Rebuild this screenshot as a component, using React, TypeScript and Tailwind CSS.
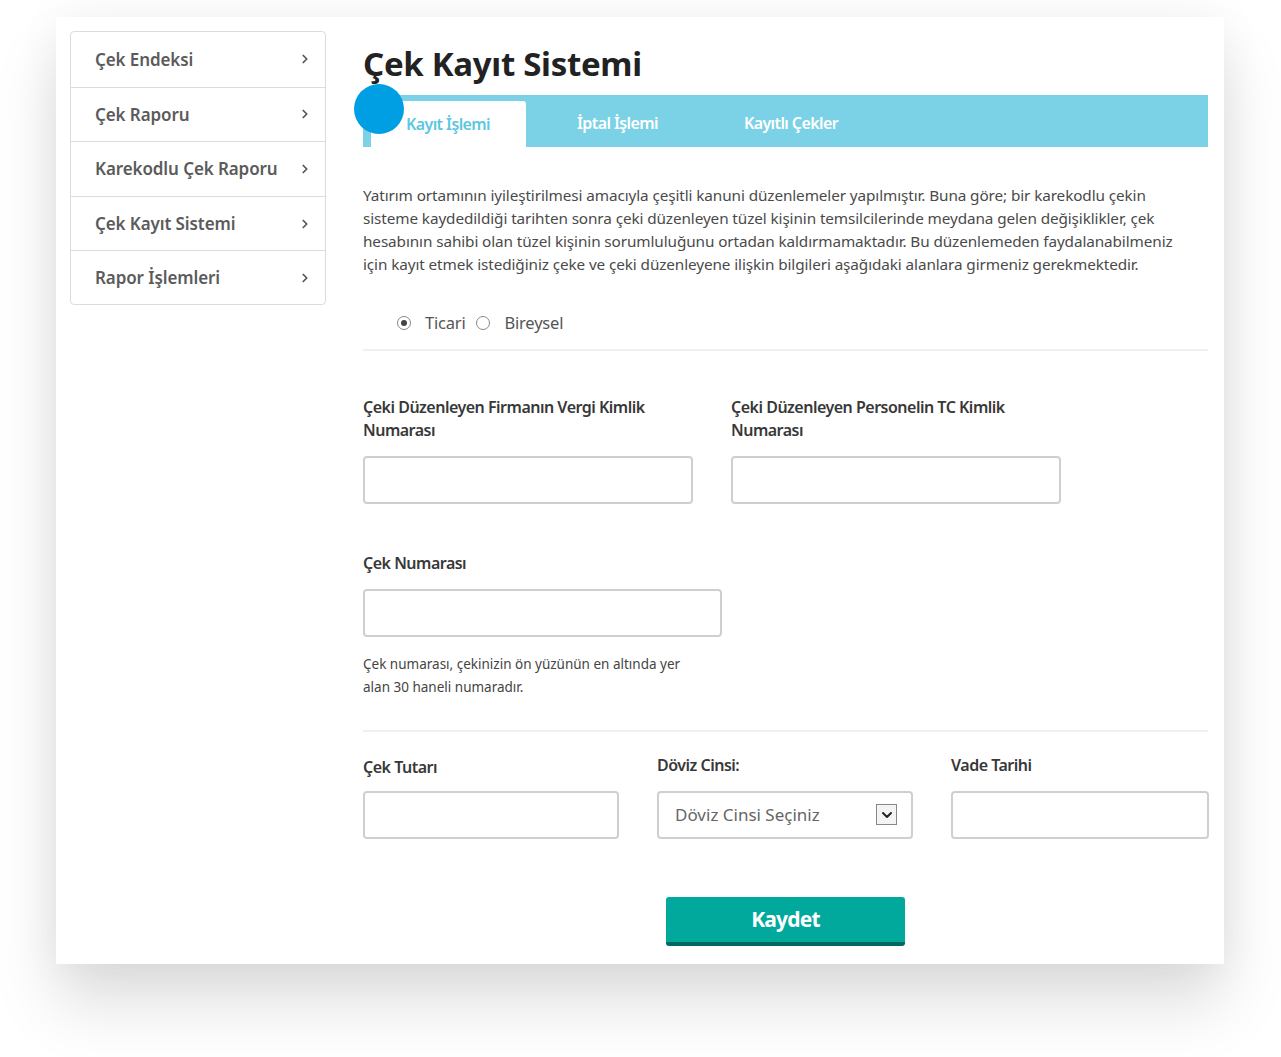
import { ChevronRight, ChevronDown } from 'lucide-react';

const MENU = ['Çek Endeksi', 'Çek Raporu', 'Karekodlu Çek Raporu', 'Çek Kayıt Sistemi', 'Rapor İşlemleri'];

const INTRO = [
  'Yatırım ortamının iyileştirilmesi amacıyla çeşitli kanuni düzenlemeler yapılmıştır. Buna göre; bir karekodlu çekin',
  'sisteme kaydedildiği tarihten sonra çeki düzenleyen tüzel kişinin temsilcilerinde meydana gelen değişiklikler, çek',
  'hesabının sahibi olan tüzel kişinin sorumluluğunu ortadan kaldırmamaktadır. Bu düzenlemeden faydalanabilmeniz',
  'için kayıt etmek istediğiniz çeke ve çeki düzenleyene ilişkin bilgileri aşağıdaki alanlara girmeniz gerekmektedir.',
];

const Field = ({ className }: { className: string }) => (
  <input
    type="text"
    className={`h-[48px] rounded-[4px] border-2 border-[#cfcfcf] bg-white outline-none ${className}`}
  />
);

const labelCls = 'text-[16px] font-semibold leading-[23px] tracking-[-0.5px] text-[#383838]';

const App = () => {
  return (
    <div className="min-h-[1057px] w-full bg-white pl-[56px] pt-[17px] font-['Noto_Sans',sans-serif]">
      <div className="flex h-[947px] w-[1168px] gap-[37px] bg-white pl-[14px] pt-[14px] shadow-[0_40px_60px_rgba(0,0,0,0.13),0_0_40px_rgba(0,0,0,0.05)]">
        {/* Menu */}
        <div className="h-[274px] w-[256px] shrink-0 rounded-[4px] border border-[#dcdcdc]">
          {MENU.map((item, i) => (
            <div
              key={item}
              className={`flex h-[54.6px] items-center justify-between pl-[24px] pr-[13px] text-[17px] font-semibold tracking-[-0.1px] text-[#5b5b5b] ${i > 0 ? 'border-t border-[#dcdcdc]' : ''}`}
            >
              <span>{item}</span>
              <ChevronRight size={14} strokeWidth={3} className="text-[#555]" />
            </div>
          ))}
        </div>

        {/* Content */}
        <div className="w-[845px]">
          <h1 className="mt-[9px] text-[33px] font-bold leading-[48px] tracking-[-0.3px] text-[#222]">Çek Kayıt Sistemi</h1>

          <div className="relative mt-[7px] flex h-[52px] bg-[#7bd1e5] pl-[8px]">
            <div className="absolute left-[-9px] top-[-11px] h-[50px] w-[50px] rounded-full bg-[#009fe3]" />
            <div className="mt-[6px] flex w-[155px] items-center rounded-tr-[3px] bg-white pl-[35px] text-[16px] font-semibold tracking-[-0.6px] text-[#5cc7e1]">
              Kayıt İşlemi
            </div>
            <div className="flex items-center pl-[51px] pt-[3px] text-[16px] font-semibold tracking-[-0.6px] text-white">İptal İşlemi</div>
            <div className="flex items-center pl-[86px] pt-[3px] text-[16px] font-semibold tracking-[-0.6px] text-white">Kayıtlı Çekler</div>
          </div>

          <div className="mt-[37px] text-[15.3px] leading-[23px] tracking-[-0.1px] text-[#4a4a4a]">
            {INTRO.map((line) => (
              <div key={line} className="whitespace-nowrap">{line}</div>
            ))}
          </div>

          <div className="mt-[35px] flex items-center pl-[34px] text-[16.5px] tracking-[-0.2px] text-[#555]">
            <span className="flex h-[14px] w-[14px] items-center justify-center rounded-full border border-[#888]">
              <span className="h-[6px] w-[6px] rounded-full bg-[#444]" />
            </span>
            <span className="ml-[14px]">Ticari</span>
            <span className="ml-[11px] h-[14px] w-[14px] rounded-full border border-[#888]" />
            <span className="ml-[14px]">Bireysel</span>
          </div>

          <div className="mt-[13px] h-[2px] bg-[#f0f0f0]" />

          <div className="mt-[45px] flex gap-[38px]">
            <div className="w-[330px]">
              <div className={`w-[310px] ${labelCls}`}>Çeki Düzenleyen Firmanın Vergi Kimlik Numarası</div>
              <Field className="mt-[14px] w-[330px]" />
            </div>
            <div className="w-[330px]">
              <div className={`w-[310px] ${labelCls}`}>Çeki Düzenleyen Personelin TC Kimlik Numarası</div>
              <Field className="mt-[14px] w-[330px]" />
            </div>
          </div>

          <div className={`mt-[48px] ${labelCls}`}>Çek Numarası</div>
          <Field className="mt-[14px] w-[359px]" />
          <p className="mt-[16px] text-[13.5px] leading-[23px] tracking-[0px] text-[#444]">
            Çek numarası, çekinizin ön yüzünün en altında yer
            <br />
            alan 30 haneli numaradır.
          </p>

          <div className="mt-[31px] h-[2px] bg-[#f0f0f0]" />

          <div className="mt-[22px] flex gap-[38px]">
            <div className="w-[256px]">
              <div className={`pt-[2px] ${labelCls}`}>Çek Tutarı</div>
              <Field className="mt-[12px] w-[256px]" />
            </div>
            <div className="w-[256px]">
              <div className={labelCls}>Döviz Cinsi:</div>
              <div className="mt-[14px] flex h-[48px] w-[256px] items-center justify-between rounded-[4px] border-2 border-[#cfcfcf] pl-[16px] pr-[14px] text-[17px] tracking-[0px] text-[#666]">
                <span>Döviz Cinsi Seçiniz</span>
                <span className="flex h-[21px] w-[21px] items-center justify-center border border-[#888] bg-[#f4f4f4]">
                  <ChevronDown size={16} strokeWidth={3} className="text-[#222]" />
                </span>
              </div>
            </div>
            <div className="w-[258px]">
              <div className={labelCls}>Vade Tarihi</div>
              <Field className="mt-[14px] w-[258px]" />
            </div>
          </div>

          <div className="mt-[58px] flex pl-[303px]">
            <button className="h-[49px] w-[239px] rounded-[3px] border-b-[4px] border-[#00695f] bg-[#00a99c] text-[21px] font-bold tracking-[-0.8px] text-white">
              Kaydet
            </button>
          </div>
        </div>
      </div>
    </div>
  );
};

export default App;
